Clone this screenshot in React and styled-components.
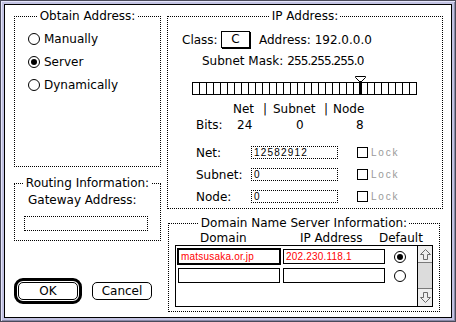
import React from "react";
import styled, { createGlobalStyle } from "styled-components";

const GlobalStyle = createGlobalStyle`
  html, body { margin: 0; padding: 0; background: #fff; }
  body {
    font-family: "DejaVu Sans", "Liberation Sans", sans-serif;
    font-size: 12px;
    line-height: 14px;
    color: #000;
  }
`;

// dialog frame: dark edge, lavender bevel, black inner line
const Window = styled.div`
  width: 456px;
  height: 322px;
  box-sizing: border-box;
  border: 1px solid #4a4a5a;
  background: #c2c2e2;
  padding: 3px;
  box-shadow: inset 1px 1px 0 #e4e4fa, inset -1px -1px 0 #8a8aa8;
`;

const Pane = styled.div`
  height: 100%;
  box-sizing: border-box;
  border: 1px solid #000;
  background: #fff;
  display: flex;
  gap: 6px;
  padding: 11px 8px 0 9px;
`;

const Column = styled.div`
  display: flex;
  flex-direction: column;
  width: ${p => p.$width}px;
  flex: none;
`;

const Group = styled.div`
  position: relative;
  box-sizing: border-box;
  width: ${p => (p.$width ? `${p.$width}px` : "100%")};
  height: ${p => p.$height}px;
  border: 1px dotted #000;
  margin: ${p => p.$margin || "0"};
  padding: ${p => p.$pad || "0"};
`;

const Legend = styled.div`
  position: absolute;
  top: -8px;
  left: 0;
  right: 0;
  display: flex;
  justify-content: center;
  span {
    background: #fff;
    padding: 0 2px;
    white-space: nowrap;
  }
`;

const RadioRow = styled.div`
  display: flex;
  align-items: center;
  gap: 4px;
  height: 23px;
`;

const Radio = styled.span`
  flex: none;
  width: 12px;
  height: 12px;
  box-sizing: border-box;
  border: 1px solid #000;
  border-radius: 50%;
  display: inline-flex;
  align-items: center;
  justify-content: center;
  margin-left: ${p => p.$ml || 0}px;
  &::after {
    content: "";
    width: 6px;
    height: 6px;
    border-radius: 50%;
    background: ${p => (p.$on ? "#000" : "transparent")};
  }
`;

const Label = styled.div`
  margin-left: 13px;
`;

const DotField = styled.div`
  box-sizing: border-box;
  width: ${p => p.$w}px;
  height: ${p => p.$h}px;
  border: 1px dotted #000;
  margin: ${p => p.$margin || "0"};
  padding-left: 2px;
  font: 10px "Liberation Sans", sans-serif;
  line-height: ${p => p.$h - 2}px;
  letter-spacing: ${p => p.$ls || 0}px;
  flex: none;
`;

const ButtonRow = styled.div`
  display: flex;
  align-items: center;
  gap: 10px;
  margin-top: 37px;
`;

const DefaultRing = styled.div`
  display: flex;
  border: 3px solid #000;
  border-radius: 9px;
  padding: 1px;
`;

const Button = styled.button`
  width: 60px;
  height: 18px;
  box-sizing: border-box;
  border: 1px solid #000;
  border-radius: 5px;
  background: #fff;
  color: #000;
  padding: 0;
  font: 12px "DejaVu Sans", sans-serif;
  line-height: 14px;
`;

const ClassRow = styled.div`
  display: flex;
  height: 18px;
  margin-top: 14px;
  padding-left: 14px;
  line-height: 18px;
`;

const ClassLabel = styled.span`
  width: 39px;
`;

const ClassBox = styled.span`
  width: 29px;
  height: 17px;
  box-sizing: border-box;
  border: 1px solid #000;
  box-shadow: 1px 1px 0 #000;
  text-align: center;
  line-height: 15px;
  margin-right: 9px;
`;

const TextRow = styled.div`
  display: flex;
  height: 14px;
  white-space: nowrap;
  margin-top: ${p => p.$mt || 0}px;
  padding-left: ${p => p.$pl || 0}px;
`;

const Cell = styled.span`
  display: inline-block;
  width: ${p => (p.$w ? `${p.$w}px` : "auto")};
`;

const Digits = styled.span`
  margin-left: 4px;
  letter-spacing: -0.9px;
`;

const Slider = styled.div`
  position: relative;
  display: flex;
  flex-direction: column;
  justify-content: flex-end;
  width: 225px;
  height: 19px;
  margin: 8px 0 0 24px;
`;

const Ticks = styled.div`
  height: 13px;
  box-sizing: border-box;
  border-top: 1px solid #000;
  border-bottom: 1px solid #000;
  background-image: linear-gradient(to right, #000 1px, transparent 1px);
  background-size: 7px 100%;
`;

const Thumb = styled.div`
  position: absolute;
  top: 0;
  left: 163px;
  width: 11px;
  height: 19px;
  svg { display: block; }
  &::after {
    content: "";
    position: absolute;
    left: 4px;
    top: 5px;
    width: 3px;
    height: 14px;
    background: #000;
  }
`;

const FieldRow = styled.div`
  display: flex;
  align-items: center;
  height: 13px;
  margin-top: ${p => p.$mt}px;
  padding-left: 28px;
`;

const FieldLabel = styled.span`
  width: 55px;
  flex: none;
`;

const CheckBox = styled.span`
  flex: none;
  width: 11px;
  height: 11px;
  box-sizing: border-box;
  border: 1px solid #000;
  margin-left: 19px;
`;

const LockText = styled.span`
  margin-left: 3px;
  color: #9a9a9a;
  font: 10px "Liberation Sans", sans-serif;
  letter-spacing: 1.8px;
`;

const List = styled.div`
  display: flex;
  width: 258px;
  height: 62px;
  box-sizing: border-box;
  border: 1px solid #000;
  margin-left: 6px;
`;

const Rows = styled.div`
  flex: 1;
  display: flex;
  flex-direction: column;
  gap: 4px;
  padding: 3px 0 0 2px;
`;

const DnsRow = styled.div`
  display: flex;
  align-items: center;
  gap: 3px;
  height: 15px;
`;

const Entry = styled.div`
  flex: none;
  width: 102px;
  height: 15px;
  box-sizing: border-box;
  border: 1px solid #000;
  box-shadow: ${p => (p.$active ? "0 0 0 1px #000" : "none")};
  color: #f00;
  padding-left: 2px;
  font: 10px "Liberation Sans", sans-serif;
  line-height: 13px;
  letter-spacing: 0.2px;
`;

const Scroll = styled.div`
  width: 15px;
  box-sizing: border-box;
  border-left: 1px solid #000;
  display: flex;
  flex-direction: column;
  background: #dcdcdc;
`;

const ArrowBox = styled.div`
  height: ${p => p.$h}px;
  background: #eeeeee;
  border-bottom: ${p => (p.$top ? "1px solid #7a7a7a" : "none")};
  border-top: ${p => (p.$top ? "none" : "1px solid #7a7a7a")};
  margin-top: ${p => (p.$top ? 0 : "auto")};
  display: flex;
  align-items: center;
  justify-content: center;
  svg { display: block; }
`;

const Arrow = ({ down }) => (
  <svg width="13" height="13" viewBox="0 0 13 13">
    <path
      d="M6.5 1.5 L11.5 6.5 H8.5 V11.5 H4.5 V6.5 H1.5 Z"
      fill="#eeeeee"
      stroke="#6a6a6a"
      strokeWidth="1"
      transform={down ? "rotate(180 6.5 6.5)" : undefined}
    />
  </svg>
);

const fields = [
  { label: "Net:", value: "12582912", mt: 14, ls: 1.2 },
  { label: "Subnet:", value: "0", mt: 9 },
  { label: "Node:", value: "0", mt: 9 },
];

export default function App() {
  return (
    <>
      <GlobalStyle />
      <Window>
        <Pane>
          <Column $width={147}>
            <Group $height={151} $pad="10px 0 0 13px">
              <Legend><span>Obtain Address:</span></Legend>
              <RadioRow><Radio />Manually</RadioRow>
              <RadioRow><Radio $on />Server</RadioRow>
              <RadioRow><Radio />Dynamically</RadioRow>
            </Group>
            <Group $height={58} $margin="16px 0 0 0" $pad="9px 0 0 0">
              <Legend><span>Routing Information:</span></Legend>
              <Label>Gateway Address:</Label>
              <DotField $w={124} $h={15} $margin="9px 0 0 9px" />
            </Group>
            <ButtonRow>
              <DefaultRing><Button>OK</Button></DefaultRing>
              <Button>Cancel</Button>
            </ButtonRow>
          </Column>

          <Column $width={276}>
            <Group $height={193}>
              <Legend><span>IP Address:</span></Legend>
              <ClassRow>
                <ClassLabel>Class:</ClassLabel>
                <ClassBox>C</ClassBox>
                <span>Address: 192.0.0.0</span>
              </ClassRow>
              <TextRow $mt={5} $pl={34}>
                Subnet Mask:<Digits>255.255.255.0</Digits>
              </TextRow>
              <Slider>
                <Ticks />
                <Thumb>
                  <svg width="11" height="6" viewBox="0 0 11 6">
                    <path d="M0.5 0.5 H10.5 V1.5 L6.5 5.5 H4.5 L0.5 1.5 Z" fill="#fff" stroke="#000" strokeWidth="1" />
                  </svg>
                </Thumb>
              </Slider>
              <TextRow $mt={7} $pl={65}>
                <Cell $w={30}>Net</Cell>
                <Cell $w={10}>|</Cell>
                <Cell $w={51}>Subnet</Cell>
                <Cell $w={9}>|</Cell>
                <Cell>Node</Cell>
              </TextRow>
              <TextRow $mt={2} $pl={28}>
                <Cell $w={41}>Bits:</Cell>
                <Cell $w={59}>24</Cell>
                <Cell $w={60}>0</Cell>
                <Cell>8</Cell>
              </TextRow>
              {fields.map(f => (
                <FieldRow key={f.label} $mt={f.mt}>
                  <FieldLabel>{f.label}</FieldLabel>
                  <DotField $w={87} $h={13} $ls={f.ls}>{f.value}</DotField>
                  <CheckBox />
                  <LockText>Lock</LockText>
                </FieldRow>
              ))}
            </Group>

            <Group $width={272} $height={89} $margin="14px 0 0 1px">
              <Legend><span>Domain Name Server Information:</span></Legend>
              <TextRow $mt={7} $pl={31}>
                <Cell $w={100}>Domain</Cell>
                <Cell $w={79}>IP Address</Cell>
                <Cell>Default</Cell>
              </TextRow>
              <List>
                <Rows>
                  <DnsRow>
                    <Entry $active>matsusaka.or.jp</Entry>
                    <Entry>202.230.118.1</Entry>
                    <Radio $on $ml={6} />
                  </DnsRow>
                  <DnsRow>
                    <Entry />
                    <Entry />
                    <Radio $ml={6} />
                  </DnsRow>
                </Rows>
                <Scroll>
                  <ArrowBox $top $h={16}><Arrow /></ArrowBox>
                  <ArrowBox $h={17}><Arrow down /></ArrowBox>
                </Scroll>
              </List>
            </Group>
          </Column>
        </Pane>
      </Window>
    </>
  );
}
